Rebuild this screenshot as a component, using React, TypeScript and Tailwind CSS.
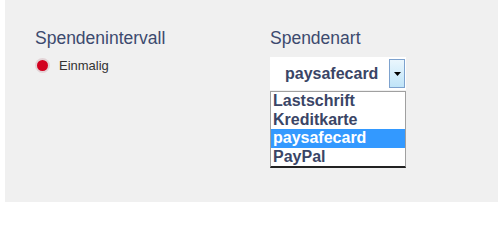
import React from "react";

const options = ["Lastschrift", "Kreditkarte", "paysafecard", "PayPal"];

export default function App() {
  const selected = "paysafecard";
  return (
    <div className="h-[203px] w-[498px] bg-white pl-[5px] font-['Liberation_Sans',Arial,sans-serif]">
      <div className="flex h-[202px] bg-[#f0f0f0] pt-[27px]">
        <div className="w-[265px] pl-[30px]">
          <h3 className="text-[17.5px] leading-[22px] text-[#3c4a6e]">
            Spendenintervall
          </h3>
          <label className="mt-[7px] flex items-center gap-[9px]">
            <span className="flex h-[15px] w-[15px] items-center justify-center rounded-full bg-[#e3d3d6]">
              <span className="h-[11px] w-[11px] rounded-full bg-[#d2001f]" />
            </span>
            <span className="text-[13px] text-[#333]">Einmalig</span>
          </label>
        </div>
        <div>
          <h3 className="text-[17.5px] leading-[22px] text-[#3c4a6e]">
            Spendenart
          </h3>
          <div className="mt-[8px] w-[136px]">
            <div className="flex h-[33px] items-center justify-between bg-white pl-[15px] pr-[1px]">
              <span className="text-[16px] font-bold text-[#3a4566]">
                {selected}
              </span>
              <span className="flex h-[29px] w-[16px] items-center justify-center border border-[#7da2ce] bg-gradient-to-b from-[#eaf6fd] to-[#bfe4f8]">
                <svg width="7" height="4" viewBox="0 0 7 4">
                  <path d="M0 0h7L3.5 4z" fill="#000" />
                </svg>
              </span>
            </div>
            <ul className="mt-[1px] border border-b-2 border-[#a0a0a0] border-b-[#222] bg-white">
              {options.map((o) => (
                <li
                  key={o}
                  className={`h-[18.5px] pl-[2px] text-[16px] font-bold leading-[18.5px] ${
                    o === selected
                      ? "bg-[#3399ff] text-white"
                      : "text-[#3a4566]"
                  }`}
                >
                  {o}
                </li>
              ))}
            </ul>
          </div>
        </div>
      </div>
    </div>
  );
}
